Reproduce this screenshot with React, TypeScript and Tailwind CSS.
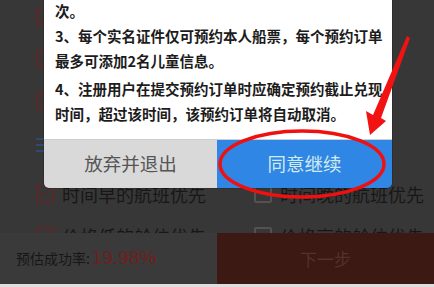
import React from 'react';

const font = { fontFamily: '"Noto Sans CJK SC", "Noto Sans", sans-serif' };

function Box({ checked }: { checked?: boolean }) {
  return (
    <div
      className={`w-[18px] h-[18px] border-2 ${checked ? 'border-[#5a2828]' : 'border-[#525252]'} rounded-[2px] relative shrink-0`}
    >
      {checked && (
        <svg viewBox="0 0 18 18" className="absolute inset-0 w-full h-full">
          <path d="M2 6 L7 12 L16 2" stroke="#5a2828" strokeWidth="1.6" fill="none" />
        </svg>
      )}
    </div>
  );
}

function Option({ label, checked }: { label: string; checked?: boolean }) {
  return (
    <div className="flex items-center gap-[8px] h-[42px]">
      <Box checked={checked} />
      <span className="text-[18px] text-neutral-900 leading-none">{label}</span>
    </div>
  );
}

export default function App() {
  return (
    <div className="relative w-[434px] h-[287px] overflow-hidden bg-[#373737]" style={font}>
      {/* page underneath (dimmed) */}
      <div className="flex flex-col h-full">
        <div className="flex-1 min-h-0 overflow-hidden pl-[36px] pt-[8px] flex flex-col">
          <div className="flex flex-col gap-[24px] shrink-0">
            <Box checked />
            <Box checked />
            <Box checked />
          </div>
          <div className="mt-[28px] flex flex-col gap-[4px] w-[10px] shrink-0">
            <div className="h-[2px] bg-[#2f4a70]" />
            <div className="h-[2px] bg-[#2f4a70]" />
            <div className="h-[2px] bg-[#2f4a70]" />
          </div>
          <div className="mt-[21px] grid grid-cols-2 shrink-0">
            <div>
              <Option label="时间早的航班优先" checked />
              <Option label="价格低的舱位优先" checked />
            </div>
            <div className="pl-[19px]">
              <Option label="时间晚的航班优先" />
              <Option label="价格高的舱位优先" />
            </div>
          </div>
        </div>
        <div className="flex h-[51px] shrink-0">
          <div className="w-[217px] bg-[#3a3a3a] flex items-center pl-[16px] gap-[2px]">
            <span className="text-[14px] text-neutral-900">预估成功率:</span>
            <span className="text-[19px] text-[#6e1f1f] font-medium" style={{ fontFamily: '"Liberation Sans", sans-serif' }}>
              19.98%
            </span>
          </div>
          <div className="flex-1 bg-[#3c1912] flex items-center justify-center">
            <span className="text-[17px] text-[#52322c]">下一步</span>
          </div>
        </div>
        <div className="h-[3px] bg-[#dedede] shrink-0" />
      </div>

      {/* dialog */}
      <div className="absolute left-[44px] top-[-12px] w-[348px] rounded-[5px] overflow-hidden shadow-[0_0_0_1px_rgba(0,0,0,0.15)]">
        <div className="bg-white pl-[11px] pt-[10px] pb-[13px] text-[14.5px] leading-[25px] text-[#1c1c1c] font-semibold whitespace-nowrap">
          <div>次。</div>
          <div>3、每个实名证件仅可预约本人船票，每个预约订单</div>
          <div>最多可添加2名儿童信息。</div>
          <div className="mt-[3px]">4、注册用户在提交预约订单时应确定预约截止兑现</div>
          <div>时间，超过该时间，该预约订单将自动取消。</div>
        </div>
        <div className="flex h-[49px] border-t border-[#cfcfcf]">
          <button className="w-[173px] bg-[#d9d9d9] text-[18.5px] text-[#555]">放弃并退出</button>
          <button className="flex-1 bg-[#2f86e4] text-[18.5px] text-[#d2ebf0]">同意继续</button>
        </div>
      </div>

      {/* annotations */}
      <svg className="absolute inset-0 pointer-events-none" width="434" height="287" viewBox="0 0 434 287">
        <ellipse cx="302" cy="164" rx="82" ry="33" fill="none" stroke="#f01010" strokeWidth="3.5" />
        <polygon points="407,36 410,38 381,118 386,121 370,135 366,111 373,115" fill="#f21212" />
      </svg>
    </div>
  );
}
